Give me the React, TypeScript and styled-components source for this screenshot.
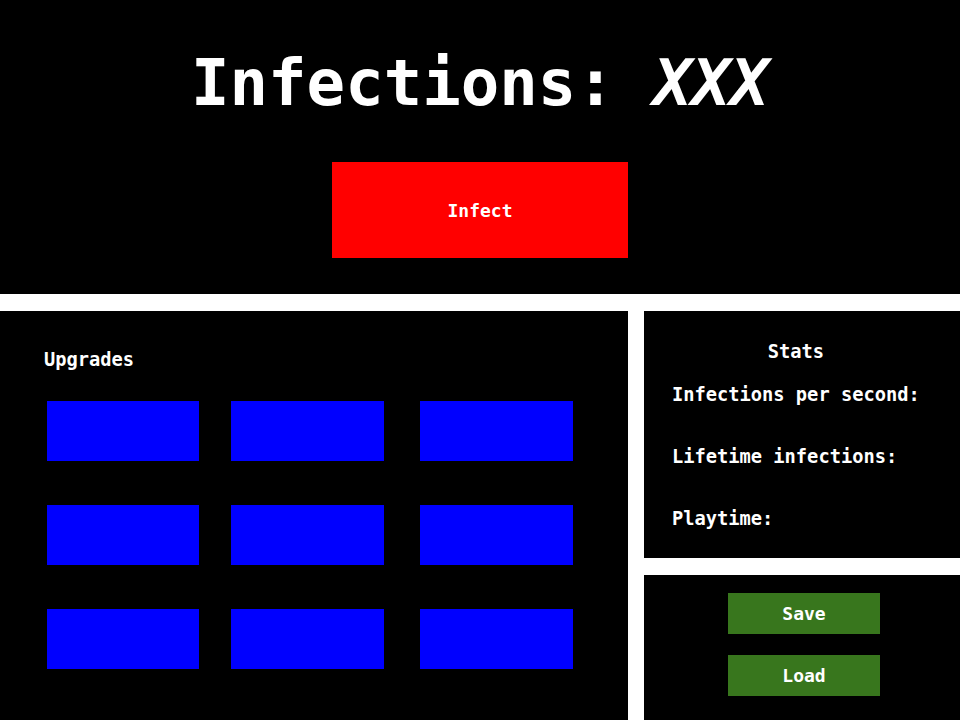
import React from "react";
import styled, { createGlobalStyle } from "styled-components";

const Global = createGlobalStyle`
  html, body {
    margin: 0;
    padding: 0;
    background: #ffffff;
  }
  body {
    font-family: "DejaVu Sans Mono", "Liberation Mono", monospace;
    color: #ffffff;
  }
`;

const Page = styled.div`
  display: grid;
  width: 960px;
  height: 720px;
  grid-template-columns: 628px 316px;
  grid-template-rows: 294px 247px 145px;
  column-gap: 16px;
  row-gap: 17px;
  background: #ffffff;
`;

const Header = styled.header`
  grid-column: 1 / 3;
  background: #000000;
  display: flex;
  flex-direction: column;
  align-items: center;
  padding-top: 45px;
  box-sizing: border-box;
`;

const Title = styled.h1`
  margin: 0;
  font-size: 64px;
  line-height: 76px;
  font-weight: 700;
  white-space: pre;
`;

const Count = styled.em`
  font-style: italic;
`;

const InfectButton = styled.button`
  margin-top: 41px;
  width: 296px;
  height: 96px;
  border: none;
  background: #ff0000;
  color: #ffffff;
  font-family: inherit;
  font-size: 18px;
  font-weight: 700;
  cursor: pointer;
`;

const Panel = styled.section`
  background: #000000;
  box-sizing: border-box;
`;

const UpgradesPanel = styled(Panel)`
  grid-row: 2 / 4;
  padding: 37px 0 0 44px;
`;

const Heading = styled.h3`
  margin: 0;
  font-size: 18.72px;
  line-height: 24px;
  font-weight: 700;
`;

const UpgradeGrid = styled.div`
  margin-top: 29px;
  margin-left: 3px;
  display: grid;
  grid-template-columns: 184px 189px 153px;
  grid-auto-rows: 60px;
  row-gap: 44px;
`;

const UpgradeTile = styled.div<{ $w: number }>`
  width: ${(p) => p.$w}px;
  height: 60px;
  background: #0000ff;
`;

const StatsPanel = styled(Panel)`
  padding: 29px 28px 27px;
`;

const StatsList = styled.div`
  width: fit-content;
  display: flex;
  flex-direction: column;
`;

const StatsTitle = styled(Heading)`
  text-align: center;
  margin-bottom: 19px;
`;

const StatLine = styled(Heading)`
  & + & {
    margin-top: 38px;
  }
`;

const ActionsPanel = styled(Panel)`
  display: flex;
  flex-direction: column;
  align-items: center;
  gap: 21px;
  padding: 18px 0 0 4px;
`;

const ActionButton = styled.button`
  width: 152px;
  height: 41px;
  border: none;
  background: #38761d;
  color: #ffffff;
  font-family: inherit;
  font-size: 18px;
  font-weight: 700;
  cursor: pointer;
`;

const widths = [152, 153, 153];

export default function App() {
  return (
    <>
      <Global />
      <Page>
        <Header>
          <Title>
            Infections: <Count>XXX</Count>
          </Title>
          <InfectButton>Infect</InfectButton>
        </Header>
        <UpgradesPanel>
          <Heading>Upgrades</Heading>
          <UpgradeGrid>
            {Array.from({ length: 9 }).map((_, i) => (
              <UpgradeTile key={i} $w={widths[i % 3]} />
            ))}
          </UpgradeGrid>
        </UpgradesPanel>
        <StatsPanel>
          <StatsList>
            <StatsTitle>Stats</StatsTitle>
            <StatLine>Infections per second:</StatLine>
            <StatLine>Lifetime infections:</StatLine>
            <StatLine>Playtime:</StatLine>
          </StatsList>
        </StatsPanel>
        <ActionsPanel>
          <ActionButton>Save</ActionButton>
          <ActionButton>Load</ActionButton>
        </ActionsPanel>
      </Page>
    </>
  );
}
